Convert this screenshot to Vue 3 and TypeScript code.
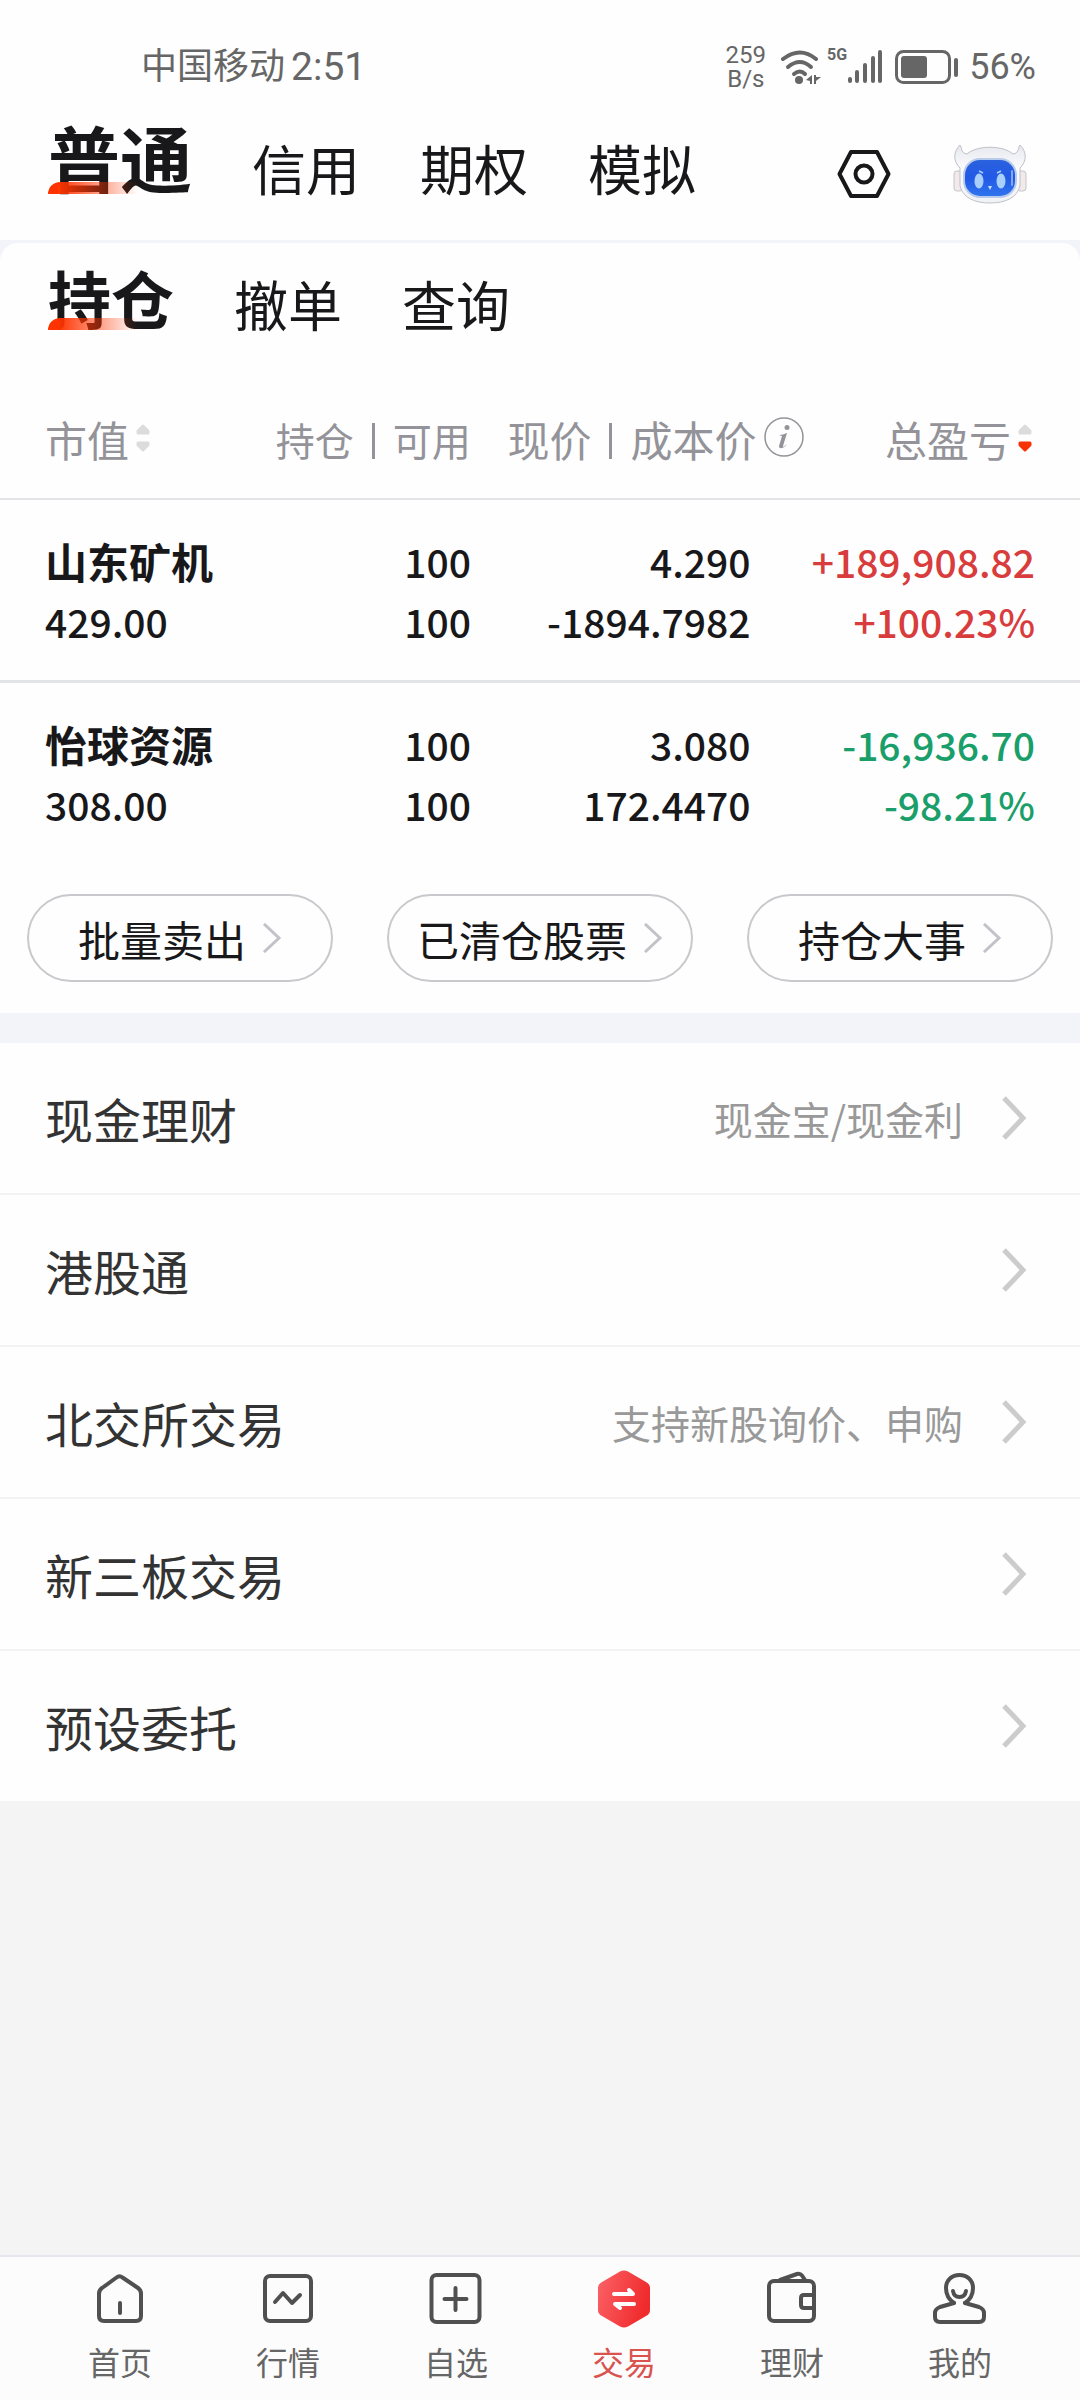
<script setup lang="ts">
import { ref } from 'vue'

interface Holding {
  name: string
  value: string
  held: string
  usable: string
  price: string
  cost: string
  profit: string
  rate: string
  trend: 'up' | 'down'
}

interface Entry {
  label: string
  note?: string
}

const markets = ['普通', '信用', '期权', '模拟']
const views = ['持仓', '撤单', '查询']
const market = ref('普通')
const view = ref('持仓')

const holdings: Holding[] = [
  {
    name: '山东矿机', value: '429.00', held: '100', usable: '100',
    price: '4.290', cost: '-1894.7982', profit: '+189,908.82', rate: '+100.23%', trend: 'up',
  },
  {
    name: '怡球资源', value: '308.00', held: '100', usable: '100',
    price: '3.080', cost: '172.4470', profit: '-16,936.70', rate: '-98.21%', trend: 'down',
  },
]

const shortcuts = ['批量卖出', '已清仓股票', '持仓大事']

const entries: Entry[] = [
  { label: '现金理财', note: '现金宝/现金利' },
  { label: '港股通' },
  { label: '北交所交易', note: '支持新股询价、申购' },
  { label: '新三板交易' },
  { label: '预设委托' },
]

const tabs = ['首页', '行情', '自选', '交易', '理财', '我的']
const tab = ref('交易')
</script>

<template>
  <div class="page">
    <div class="status">
      <div class="status-side">
        <span class="carrier">中国移动</span>
        <span class="clock">2:51</span>
      </div>
      <div class="status-side">
        <span class="speed"><span>259</span><span>B/s</span></span>
        <svg class="wifi" width="42" height="36" viewBox="0 0 42 36" aria-hidden="true">
          <g fill="none" stroke="#666" stroke-width="4" stroke-linecap="round">
            <path d="M3 10 Q20 -3 36 10" />
            <path d="M8 18 Q20 8 31 18" />
            <path d="M14 25 Q20 20 25 25" />
          </g>
          <circle cx="19" cy="31" r="4" fill="#666" />
          <path d="M26 31 L32 26 V35 H30 V32 Z M34 26 V35 H36 V32 L41 28 H36 V26 Z" fill="#666" />
        </svg>
        <span class="gen">5G</span>
        <svg class="signal" width="36" height="36" viewBox="0 0 36 36" aria-hidden="true">
          <g stroke="#666" stroke-width="4" stroke-linecap="round">
            <path d="M3 30 V32 M10 23 V32 M18 16 V32 M26 9 V32 M33 3 V32" />
          </g>
        </svg>
        <svg class="battery" width="64" height="34" viewBox="0 0 64 34" aria-hidden="true">
          <rect x="1.5" y="1.5" width="53" height="31" rx="7" fill="none" stroke="#666" stroke-width="3" />
          <rect x="6" y="6" width="26" height="22" rx="3" fill="#666" />
          <path d="M61 10 V25" stroke="#666" stroke-width="4" stroke-linecap="round" />
        </svg>
        <span class="percent">56%</span>
      </div>
    </div>

    <header class="header">
      <nav class="tabs">
        <button
          v-for="m in markets" :key="m" type="button"
          class="tab tab-main" :class="{ active: m === market }" @click="market = m"
        >{{ m }}</button>
      </nav>
      <div class="actions">
        <button type="button" class="icon-button" aria-label="设置">
          <svg width="54" height="50" viewBox="0 0 54 50" fill="none" stroke="#18181a" stroke-width="4" stroke-linejoin="round">
            <path d="M14 3 H40 L51.500 25 L40 47 H14 L2.500 25 Z" />
            <circle cx="27" cy="25" r="8.500" />
          </svg>
        </button>
        <button type="button" class="icon-button" aria-label="智能助手">
          <svg width="74" height="60" viewBox="0 0 74 60">
            <defs>
              <linearGradient id="visor" x1="0" y1="0" x2="0" y2="1">
                <stop offset="0" stop-color="#2b62dd" />
                <stop offset=".5" stop-color="#2259e6" />
                <stop offset="1" stop-color="#2f74ee" />
              </linearGradient>
              <linearGradient id="shell" x1="0" y1="0" x2="0" y2="1">
                <stop offset="0" stop-color="#e6e8ee" />
                <stop offset=".4" stop-color="#fbfbfd" />
                <stop offset="1" stop-color="#f1f2f6" />
              </linearGradient>
            </defs>
            <rect x="1" y="27" width="9" height="20" rx="3" fill="#f1e9ea" stroke="#c4c5cb" />
            <rect x="64" y="27" width="9" height="20" rx="3" fill="#f1e9ea" stroke="#c4c5cb" />
            <path d="M7 1 C9 2 7 9 14 10 C24 1 50 1 60 10 C67 9 65 2 67 1 C74 8 74 17 67 24 V42 C64 54 52 59 37 59 C22 59 10 54 7 42 V24 C0 17 0 8 7 1 Z" fill="url(#shell)" stroke="#bfc1c8" />
            <rect x="10" y="14" width="54" height="40" rx="17" fill="#b9cbea" />
            <rect x="12" y="16" width="50" height="36" rx="15" fill="url(#visor)" />
            <ellipse cx="26" cy="37" rx="4.500" ry="7.500" fill="#a8d0fb" />
            <ellipse cx="48" cy="37" rx="4.500" ry="7.500" fill="#a8d0fb" />
            <path d="M26 27 L30 29 M48 27 L44 29" stroke="#a8d0fb" stroke-width="1.500" />
            <path d="M35 42 H39 L37 46 Z" fill="#c4defd" />
            <path d="M59 27 V41" stroke="#7fa9f7" stroke-width="2" stroke-linecap="round" />
          </svg>
        </button>
      </div>
    </header>

    <main class="main">
      <section class="card">
        <nav class="tabs tabs-sub">
          <button
            v-for="v in views" :key="v" type="button"
            class="tab tab-view" :class="{ active: v === view }" @click="view = v"
          >{{ v }}</button>
        </nav>

        <table class="holdings">
          <colgroup>
            <col class="col-name"><col class="col-held"><col class="col-price"><col>
          </colgroup>
          <thead>
            <tr>
              <th scope="col">
                <div class="head">
                  市值
                  <svg class="sort" width="14" height="28" viewBox="0 0 14 28" fill="#dcdcdc" stroke="#dcdcdc" stroke-width="3" stroke-linejoin="round">
                    <path d="M7 2 L12 7 V9 H2 V7 Z" /><path d="M7 26 L12 21 V19 H2 V21 Z" />
                  </svg>
                </div>
              </th>
              <th scope="col"><div class="head head-held">持仓<i class="bar" />可用</div></th>
              <th scope="col">
                <div class="head">
                  现价<i class="bar" />成本价
                  <svg class="info" width="40" height="40" viewBox="0 0 40 40">
                    <circle cx="20" cy="20" r="19" fill="none" stroke="#939399" stroke-width="1.500" />
                    <circle cx="23" cy="10.500" r="2.500" fill="#939399" />
                    <path d="M15 18 C18 18 20 17 23 16 L19 29 C19 31 21 29 23 27 C21 31 15 33 15 29 L18 19 Z" fill="#939399" />
                  </svg>
                </div>
              </th>
              <th scope="col">
                <div class="head">
                  总盈亏
                  <svg class="sort" width="14" height="28" viewBox="0 0 14 28" stroke-width="3" stroke-linejoin="round">
                    <path d="M7 2 L12 7 V9 H2 V7 Z" fill="#dcdcdc" stroke="#dcdcdc" />
                    <path d="M7 26 L12 21 V19 H2 V21 Z" fill="#f63204" stroke="#f63204" />
                  </svg>
                </div>
              </th>
            </tr>
          </thead>
          <tbody>
            <tr v-for="h in holdings" :key="h.name">
              <td><div class="name">{{ h.name }}</div><div>{{ h.value }}</div></td>
              <td><div>{{ h.held }}</div><div>{{ h.usable }}</div></td>
              <td class="price"><div>{{ h.price }}</div><div>{{ h.cost }}</div></td>
              <td :class="h.trend"><div>{{ h.profit }}</div><div>{{ h.rate }}</div></td>
            </tr>
          </tbody>
        </table>

        <div class="shortcuts">
          <button v-for="s in shortcuts" :key="s" type="button" class="shortcut">
            {{ s }}
            <svg width="20" height="30" viewBox="0 0 20 30" fill="none" stroke="#c2c2c8" stroke-width="3">
              <path d="M2 1 L17 15 L2 29" />
            </svg>
          </button>
        </div>
      </section>

      <section class="entries">
        <a v-for="e in entries" :key="e.label" href="#" class="entry">
          <span class="entry-label">{{ e.label }}</span>
          <span class="entry-note">{{ e.note }}</span>
          <svg class="entry-arrow" width="26" height="44" viewBox="0 0 26 44" fill="none" stroke="#ccc" stroke-width="5">
            <path d="M3 2 L22 22 L3 42" />
          </svg>
        </a>
      </section>
    </main>

    <nav class="bottom">
      <button
        v-for="t in tabs" :key="t" type="button"
        class="bottom-item" :class="{ current: t === tab }" @click="tab = t"
      >
        <svg width="58" height="58" viewBox="0 0 58 58" fill="none" stroke="#505050" stroke-width="4" stroke-linecap="round" stroke-linejoin="round">
          <template v-if="t === '首页'">
            <path d="M25.500 7.500 Q28.500 5 31.500 7.500 L47 18 Q50 20 50 24 V46 Q50 51 45 51 H13 Q8 51 8 46 V24 Q8 20 11 18 Z" />
            <path d="M29 33 V43" />
          </template>
          <template v-else-if="t === '行情'">
            <rect x="6" y="6" width="46" height="45" rx="5" />
            <path d="M16 32 L24 23 L33 33 L41 25" />
          </template>
          <template v-else-if="t === '自选'">
            <rect x="4.500" y="5" width="48" height="47" rx="5" />
            <path d="M28.500 18 V40 M17.500 29 H39.500" />
          </template>
          <template v-else-if="t === '交易'">
            <defs>
              <linearGradient id="trade" x1="0" y1="0" x2="1" y2="0.300">
                <stop offset="0" stop-color="#fb6368" />
                <stop offset="1" stop-color="#f02b2d" />
              </linearGradient>
            </defs>
            <path d="M25 1.500 Q29 -0.500 33 1.500 L51 12 Q55 14 55 18 V40 Q55 44 51 46 L33 56.500 Q29 58.500 25 56.500 L7 46 Q3 44 3 40 V18 Q3 14 7 12 Z" fill="url(#trade)" stroke="none" />
            <path d="M19 24 H38 L34 20 M39 34 H20 L25 38" stroke="#fff" />
          </template>
          <template v-else-if="t === '理财'">
            <rect x="6" y="11" width="45" height="40" rx="5" />
            <path d="M17 10 L34 4 Q37 3 39 5.500 L42 10" />
            <path d="M50 25 H41 Q38 25 38 28 V35 Q38 38 41 38 H50" />
          </template>
          <template v-else>
            <path d="M23 33 C17 29 15 24 15 18 C15 10 21 5 28.500 5 C36 5 42 10 42 18 C42 24 40 29 34 33" />
            <path d="M23 33 L9 37 Q4 39 4 43 V47 Q4 52 9 52 H48 Q53 52 53 47 V43 Q53 39 48 37 L34 33" />
            <path d="M22 21 Q23 27 28.500 27 Q34 27 35 21" />
          </template>
        </svg>
        <span>{{ t }}</span>
      </button>
    </nav>
  </div>
</template>

<style>
body {
  margin: 0;
  background: #f4f4f4;
}
</style>

<style scoped>
.page {
  display: flex;
  flex-direction: column;
  min-height: 100vh;
  background: #f4f4f4;
  color: #18181a;
  font-family: "Noto Sans CJK SC", sans-serif;
}

button {
  margin: 0;
  padding: 0;
  border: 0;
  background: none;
  color: inherit;
  font: inherit;
  cursor: pointer;
}

svg {
  display: block;
  flex: none;
}

.status {
  display: flex;
  justify-content: space-between;
  align-items: center;
  box-sizing: border-box;
  height: 110px;
  padding: 24px 44px 0 141px;
  background: #fefefe;
  color: #666;
  font-family: Roboto, "Noto Sans CJK SC", sans-serif;
}

.status-side {
  display: flex;
  align-items: center;
}

.carrier {
  font-size: 36px;
  line-height: 40px;
}

.clock {
  margin-left: 6px;
  font-size: 39px;
  line-height: 40px;
}

.speed {
  display: flex;
  flex-direction: column;
  align-items: center;
  font-size: 24px;
  line-height: 24px;
}

.wifi {
  margin-left: 14px;
}

.gen {
  margin-left: 5px;
  align-self: flex-start;
  font-size: 16px;
  font-weight: 700;
  line-height: 24px;
}

.battery {
  margin-left: 12px;
}

.percent {
  margin-left: 10px;
  font-size: 36px;
  line-height: 40px;
}

.header {
  display: flex;
  justify-content: space-between;
  align-items: center;
  box-sizing: border-box;
  height: 130px;
  padding: 0 53px 0 48px;
  background: #fefefe;
}

.tabs {
  display: flex;
  align-items: flex-end;
  gap: 60px;
  padding-bottom: 38px;
}

.tab {
  position: relative;
  font-size: 54px;
  line-height: 52px;
  white-space: nowrap;
}

.tab.active {
  font-weight: 700;
}

.tab-main.active {
  font-size: 72px;
  line-height: 76px;
}

.tab-view.active {
  font-size: 63px;
  line-height: 66px;
}

.tab.active::after {
  content: "";
  position: absolute;
  left: 0;
  bottom: 0;
  width: 90px;
  height: 12px;
  border-top-left-radius: 12px;
  background: linear-gradient(90deg, #ff3300 10%, rgba(255, 51, 0, 0));
}

.actions {
  display: flex;
  align-items: center;
  gap: 62px;
  padding-bottom: 2px;
}

.main {
  background: #f3f4f9;
  padding-top: 3px;
}

.card {
  border-radius: 18px 18px 0 0;
  background: #fefefe;
}

.tabs-sub {
  padding: 21px 48px 52px;
}

.holdings {
  width: 100%;
  table-layout: fixed;
  border-collapse: separate;
  border-spacing: 0;
}

.col-name {
  width: 20%;
}

.col-held {
  width: 23.6%;
}

.col-price {
  width: 30.8%;
}

th {
  height: 114px;
  padding: 0 0 2px;
  border-bottom: 2px solid #e3e4e8;
  color: #939399;
  font-size: 42px;
  font-weight: 400;
  line-height: 48px;
}

.head {
  display: flex;
  align-items: center;
  justify-content: flex-end;
  white-space: nowrap;
}

th:first-child .head {
  justify-content: flex-start;
}

.head-held {
  font-size: 39px;
}

.bar {
  width: 3px;
  height: 36px;
  margin: 4px 18px 0;
  background: #939399;
}

.sort {
  margin: 0 0 2px 7px;
}

.info {
  margin: 0 0 4px 7px;
}

td {
  padding: 31px 0 29px;
  border-bottom: 3px solid #e3e4e8;
  font-size: 39px;
  font-weight: 500;
  line-height: 60px;
  text-align: right;
  white-space: nowrap;
}

tbody tr:last-child td {
  border-bottom: 0;
}

th:first-child,
td:first-child {
  padding-left: 45px;
  text-align: left;
}

th:last-child {
  padding-right: 48px;
}

td:last-child {
  padding-right: 45px;
}

.name {
  font-size: 42px;
  font-weight: 700;
}

td.price {
  padding-right: 53px;
}

.up {
  color: #d93c3c;
}

.down {
  color: #1a9f6b;
}

.shortcuts {
  display: flex;
  gap: 54px;
  padding: 31px 27px;
}

.shortcut {
  display: flex;
  flex: 1;
  justify-content: center;
  align-items: center;
  gap: 16px;
  box-sizing: border-box;
  height: 88px;
  border: 2px solid #c9c9cd;
  border-radius: 44px;
  font-size: 42px;
  white-space: nowrap;
}

.entries {
  margin-top: 30px;
  background: #fefefe;
}

.entry {
  display: flex;
  align-items: center;
  box-sizing: border-box;
  height: 152px;
  padding: 0 53px 0 45px;
  border-bottom: 2px solid #f2f3f4;
  color: #333;
  text-decoration: none;
}

.entry:last-child {
  height: 150px;
  border-bottom: 0;
}

.entry-label {
  flex: 1;
  font-size: 48px;
  line-height: 56px;
}

.entry-note {
  color: #999;
  font-size: 39px;
  line-height: 48px;
}

.entry-arrow {
  margin-left: 38px;
}

.bottom {
  display: flex;
  margin-top: auto;
  padding: 13px 36px 21px;
  border-top: 2px solid #e5e6ee;
  background: #fcfcfc;
}

.bottom-item {
  display: flex;
  flex: 1;
  flex-direction: column;
  align-items: center;
  gap: 15px;
  color: #666;
  font-size: 32px;
  line-height: 36px;
}

.bottom-item.current {
  color: #d9534f;
}
</style>
